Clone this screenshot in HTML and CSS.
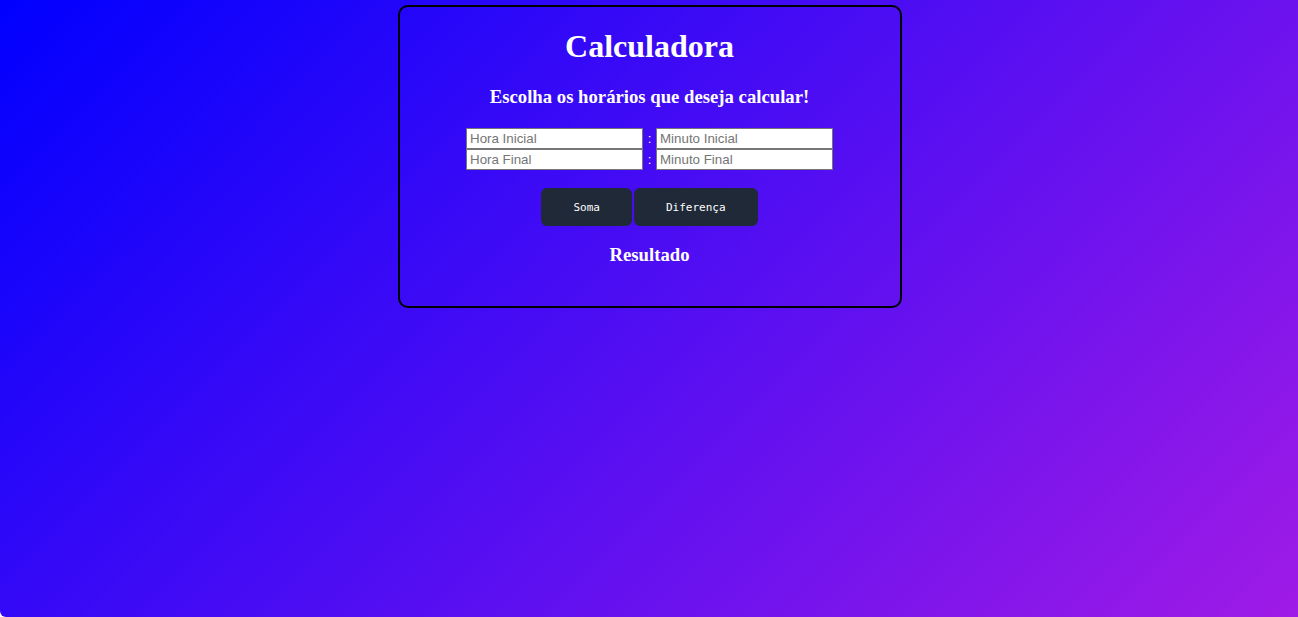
FILE: index.html
```html
<!DOCTYPE html>
<html lang="pt">
<head>
<meta charset="utf-8">
<title>Calculadora</title>
<link rel="stylesheet" href="styles.css">
</head>
<body>
<div class="page">
  <main class="card">
    <h1 class="title">Calculadora</h1>
    <h3 class="subtitle">Escolha os horários que deseja calcular!</h3>
    <div class="fields">
      <div class="row">
        <input class="field" type="text" placeholder="Hora Inicial">
        <span class="sep">:</span>
        <input class="field" type="text" placeholder="Minuto Inicial">
      </div>
      <div class="row">
        <input class="field" type="text" placeholder="Hora Final">
        <span class="sep">:</span>
        <input class="field" type="text" placeholder="Minuto Final">
      </div>
    </div>
    <div class="actions">
      <button class="btn" type="button">Soma</button>
      <button class="btn" type="button">Diferença</button>
    </div>
    <h3 class="result">Resultado</h3>
  </main>
</div>
</body>
</html>
```
FILE: styles.css
```css
html, body {
  margin: 0;
  padding: 0;
  background: #ffffff;
}

.page {
  height: 617px;
  box-sizing: border-box;
  padding: 5px 0 0 2px;
  background: linear-gradient(135deg, #0000ff 0%, #a01be6 100%);
  border-bottom-left-radius: 6px;
  font-family: "Liberation Serif", "Times New Roman", serif;
  color: #ffffff;
}

.card {
  width: 499px;
  margin: 0 auto;
  border: 2px solid #000000;
  border-radius: 10px;
  padding: 0 1px 22px 0;
  text-align: center;
}

.title {
  font-size: 32px;
  font-weight: bold;
  margin: 21px 0;
}

.subtitle {
  font-size: 18.72px;
  font-weight: bold;
  margin: 19px 0;
}

.result {
  font-size: 18.72px;
  font-weight: bold;
  margin: 18px 0 18px;
}

.fields {
  display: flex;
  flex-direction: column;
  align-items: center;
  padding-top: 1px;
}

.row {
  display: flex;
  align-items: center;
}

.field {
  box-sizing: border-box;
  width: 177px;
  height: 21px;
  margin: 0;
  padding: 1px 3px;
  border: 1px solid #767676;
  background: #ffffff;
  font-family: "Liberation Sans", Arial, sans-serif;
  font-size: 13.33px;
  color: #000000;
}

.field::placeholder {
  color: #757575;
}

.sep {
  width: 13px;
  text-align: center;
  font-family: "Liberation Sans", Arial, sans-serif;
  font-size: 13.33px;
  color: #ffffff;
}

.actions {
  display: flex;
  justify-content: center;
  gap: 2px;
  margin-top: 18px;
}

.btn {
  height: 38px;
  padding: 0 32px;
  border: none;
  border-radius: 6px;
  background: #1f2937;
  color: #ffffff;
  font-family: "DejaVu Sans Mono", monospace;
  font-size: 11px;
  cursor: pointer;
}
```
